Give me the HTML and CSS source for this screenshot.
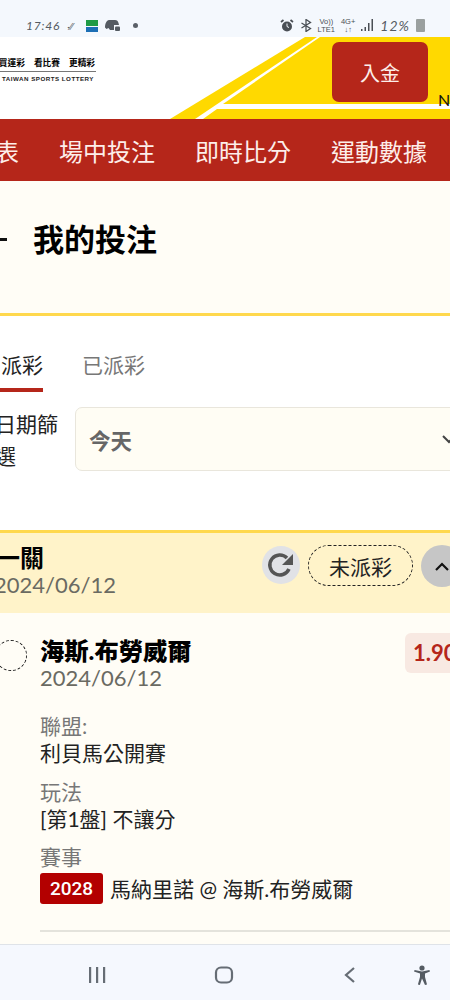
FILE: index.html
```html
<!DOCTYPE html>
<html lang="zh-Hant">
<head>
  <meta charset="UTF-8">
  <meta name="viewport" content="width=device-width, initial-scale=1.0">
  <title>我的投注</title>
  <link rel="stylesheet" href="styles.css">
</head>
<body>

  <!-- Phone status bar -->
  <div class="statusbar">
    <div class="status-left">
      <span class="clock">17:46</span>
      <span class="clock-marks">·⁄⁄</span>
      <span class="app-flag"></span>
      <svg class="app-game" width="15" height="13" viewBox="0 0 15 13"><path d="M4 1h6c2 0 3 1 3.500 3l.5 2H9v5H5l-1.500-2L1.500 10 0 8.500C0 5 1.500 1 4 1z" fill="#555b62"/><rect x="10" y="7.500" width="5" height="4.500" rx="1" fill="#555b62"/></svg>
      <span class="app-dot"></span>
    </div>
    <div class="status-right">
      <svg width="14" height="14" viewBox="0 0 14 14"><circle cx="7" cy="7.500" r="5" fill="#4a4f55"/><path d="M1 3l2.500-2M13 3l-2.500-2" stroke="#4a4f55" stroke-width="1.800"/><path d="M7 4.500v3l2 1" stroke="#f4f8fd" stroke-width="1" fill="none"/></svg>
      <svg width="12" height="13" viewBox="0 0 12 13" fill="none" stroke="#4a4f55" stroke-width="1.300"><path d="M1.500 4l9 5.500-4.500 3V.5l4.500 3-9 5.500"/></svg>
      <span class="net">Vo))<br>LTE1</span>
      <span class="net">4G+<br>↓↑</span>
      <svg width="13" height="13" viewBox="0 0 13 13" fill="#4a4f55"><rect x="0" y="10" width="1.500" height="2"/><rect x="3.500" y="8" width="1.500" height="4"/><rect x="7" y="4" width="1.500" height="8"/><rect x="10.500" y="0" width="1.500" height="12"/></svg>
      <span class="battery-text">12%</span>
      <span class="battery"></span>
    </div>
  </div>

  <!-- Header -->
  <div class="header">
    <div class="logo">
      <div class="logo-cn"><span>買運彩</span><span>看比賽</span><span>更精彩</span></div>
      <div class="logo-en">TAIWAN SPORTS LOTTERY</div>
    </div>
    <svg class="header-bg" width="280" height="82" viewBox="0 0 280 82">
      <polygon points="135,0 147,0 25,82 0,82" fill="#ffd900"/>
      <polygon points="150,0 280,0 280,67 53,67" fill="#ffd900"/>
      <polygon points="47,72 280,72 280,82 33,82" fill="#ffd900"/>
    </svg>
    <a class="deposit-btn">入金</a>
    <span class="header-cut">N</span>
  </div>

  <!-- Nav -->
  <div class="nav">
    <span class="nav-item">表</span>
    <span class="nav-item">場中投注</span>
    <span class="nav-item">即時比分</span>
    <span class="nav-item">運動數據</span>
  </div>

  <div class="content">
    <div class="page-title">
      <span class="title-dash"></span>
      <h1>我的投注</h1>
    </div>

    <div class="tab-section">
      <div class="tabs">
        <span class="tab active">派彩</span>
        <span class="tab">已派彩</span>
      </div>
      <div class="filter">
        <label class="filter-label">日期篩<br>選</label>
        <div class="filter-select">
          <span>今天</span>
          <svg width="14" height="9" viewBox="0 0 14 9" fill="none" stroke="#444" stroke-width="2"><path d="M1 1l6 6 6-6"/></svg>
        </div>
      </div>
    </div>

    <div class="bet-head">
      <div class="bet-head-text">
        <div class="bet-name">一關</div>
        <div class="bet-date">2024/06/12</div>
      </div>
      <div class="bet-actions">
        <span class="refresh">
          <svg width="28" height="28" viewBox="0 0 28 28" fill="none"><path d="M22 18a10 10 0 1 1-2-11" stroke="#555" stroke-width="3.500"/><polygon points="26,3 26,14 15,14" fill="#555"/></svg>
        </span>
        <span class="status-pill">未派彩</span>
        <span class="collapse">
          <svg width="14" height="9" viewBox="0 0 14 9" fill="none" stroke="#111" stroke-width="2.200"><path d="M1 8l6-6 6 6"/></svg>
        </span>
      </div>
    </div>

    <div class="bet-body">
      <div class="pick">
        <span class="pick-mark"></span>
        <div class="pick-text">
          <div class="pick-name">海斯.布勞威爾</div>
          <div class="pick-date">2024/06/12</div>
        </div>
        <span class="odds">1.90</span>
      </div>
      <div class="info">
        <div class="info-label">聯盟:</div>
        <div class="info-value">利貝馬公開賽</div>
      </div>
      <div class="info">
        <div class="info-label">玩法</div>
        <div class="info-value">[第1盤] 不讓分</div>
      </div>
      <div class="info">
        <div class="info-label">賽事</div>
        <div class="info-value match"><span class="match-no">2028</span> 馬納里諾 @ 海斯.布勞威爾</div>
      </div>
      <div class="divider"></div>
    </div>
  </div>

  <!-- Phone nav bar -->
  <div class="phone-nav">
    <svg class="nav-recent" width="18" height="18" viewBox="0 0 18 18" fill="#666d75"><rect x="1" y="1" width="2.200" height="16"/><rect x="8" y="1" width="2.200" height="16"/><rect x="15" y="1" width="2.200" height="16"/></svg>
    <svg class="nav-home" width="20" height="18" viewBox="0 0 20 18" fill="none" stroke="#666d75" stroke-width="2.200"><rect x="2" y="1.500" width="16" height="15" rx="5"/></svg>
    <svg class="nav-back" width="12" height="18" viewBox="0 0 12 18" fill="none" stroke="#666d75" stroke-width="2.200"><path d="M10 2L2 9l8 7"/></svg>
    <svg class="nav-access" width="18" height="20" viewBox="0 0 18 20" fill="#555c63"><circle cx="9" cy="3" r="2.600"/><path d="M1 6.500l.6-1.500L9 6.500l7.400-1.500.6 1.500-5 2V12l2 7.500-2 .5L9 13.500 6.900 20l-2-.5L7 12V8.500z"/></svg>
  </div>

</body>
</html>
```

FILE: styles.css
```css
* {
  box-sizing: border-box;
}

body {
  margin: 0;
  width: 450px;
  height: 1000px;
  overflow: hidden;
  display: flex;
  flex-direction: column;
  font-family: Lato, "Noto Sans CJK TC", sans-serif;
  background-color: #fffdf6;
  color: #000;
}

/* status bar */
.statusbar {
  height: 37px;
  flex-shrink: 0;
  display: flex;
  justify-content: space-between;
  align-items: center;
  padding: 14px 25px 0 26px;
  background-color: #f4f8fd;
  color: #555b62;
}

.status-left,
.status-right {
  display: flex;
  align-items: center;
}

.status-left {
  gap: 7px;
}

.status-right {
  gap: 6px;
}

.clock {
  font-size: 12px;
  font-style: italic;
  letter-spacing: 0.8px;
}

.clock-marks {
  width: 12px;
  font-size: 10px;
  font-style: italic;
}

.app-flag {
  width: 12px;
  height: 12px;
  background: linear-gradient(#1f9a45 0 50%, #f4f8fd 50% 60%, #1c6fb5 60%);
}

.app-dot {
  width: 5px;
  height: 5px;
  margin-left: 6px;
  border-radius: 50%;
  background-color: #5a6068;
}

.net {
  font-family: "Liberation Sans", sans-serif;
  font-size: 7.5px;
  line-height: 7.5px;
  text-align: center;
  color: #4a4f55;
}

.battery-text {
  font-size: 14px;
  font-style: italic;
  letter-spacing: 1px;
}

.battery {
  width: 9px;
  height: 13px;
  border-radius: 1px;
  background-color: #9aa09f;
}

/* header */
.header {
  position: relative;
  height: 82px;
  flex-shrink: 0;
  display: flex;
  justify-content: space-between;
  background-color: white;
}

.logo {
  width: 96px;
  margin-top: 21px;
  font-family: "Liberation Sans", "Noto Sans CJK TC", sans-serif;
  font-weight: bold;
  white-space: nowrap;
}

.logo-cn {
  height: 14px;
  display: flex;
  justify-content: flex-end;
  gap: 9px;
  padding-right: 1px;
  font-size: 8.7px;
  line-height: 11px;
  border-bottom: 1px solid #777;
}

.logo-en {
  padding: 3px 0 0 2px;
  font-size: 6.2px;
  letter-spacing: 0.5px;
  color: #222;
}

.header-bg {
  position: absolute;
  right: 0;
  top: 0;
}

.deposit-btn {
  position: absolute;
  left: 332px;
  top: 5px;
  width: 96px;
  height: 60px;
  display: flex;
  align-items: center;
  justify-content: center;
  border-radius: 7px;
  background-color: #b5261a;
  color: #fdeeea;
  font-size: 20px;
}

.header-cut {
  position: absolute;
  left: 438px;
  top: 53px;
  font-size: 16px;
  color: #111;
}

/* nav */
.nav {
  height: 62px;
  flex-shrink: 0;
  display: flex;
  align-items: center;
  gap: 40px;
  margin-left: -5px;
  background-color: #b5261a;
  color: #fdeeea;
  font-size: 24px;
  white-space: nowrap;
}

.content {
  flex: 1;
  min-height: 0;
  overflow: hidden;
}

/* title */
.page-title {
  height: 135px;
  display: flex;
  align-items: flex-start;
  gap: 26px;
  padding-top: 36px;
  border-bottom: 3px solid #ffd84d;
}

.title-dash {
  width: 7px;
  height: 3px;
  margin-top: 21px;
  background-color: #111;
}

.page-title h1 {
  margin: 0;
  font-size: 31px;
  line-height: 44px;
  font-weight: bold;
}

/* tabs and filter */
.tab-section {
  height: 214px;
  background-color: white;
}

.tabs {
  display: flex;
  gap: 39px;
  padding-top: 33px;
}

.tab {
  height: 43px;
  font-size: 21px;
  line-height: 32px;
  color: #777;
}

.tab.active {
  padding-left: 1px;
  color: #222;
  border-bottom: 4px solid #b5261a;
}

.filter {
  display: flex;
  align-items: flex-start;
  gap: 17px;
  margin-top: 15px;
}

.filter-label {
  width: 58px;
  margin-left: -5px;
  padding-top: 1px;
  margin-right: 5px;
  font-size: 21px;
  line-height: 32px;
  color: #222;
  white-space: nowrap;
}

.filter-select {
  width: 400px;
  height: 64px;
  flex-shrink: 0;
  display: flex;
  justify-content: space-between;
  align-items: center;
  padding: 0 18px 0 13px;
  border: 1px solid #e9e6dc;
  border-radius: 7px;
  background-color: #fffdf4;
  font-size: 21.5px;
  font-weight: bold;
  color: #666;
}

/* bet card */
.bet-head {
  height: 83px;
  display: flex;
  justify-content: space-between;
  padding-top: 11px;
  border-top: 3px solid #ffd84d;
  background-color: #fff3c9;
}

.bet-name {
  margin-left: -4px;
  font-size: 24px;
  line-height: 28px;
  font-weight: bold;
}

.bet-date,
.pick-date {
  font-size: 22px;
  line-height: 26px;
  color: #6a6a62;
}

.bet-date {
  margin-left: -6px;
}

.bet-actions {
  display: flex;
  align-items: flex-start;
  gap: 8px;
  margin-right: -13px;
  padding-top: 1px;
}

.refresh,
.collapse {
  display: flex;
  align-items: center;
  justify-content: center;
  border-radius: 50%;
}

.refresh {
  width: 38px;
  height: 38px;
  margin-top: 1px;
  background-color: #e1e2e6;
}

.collapse {
  width: 42px;
  height: 42px;
  background-color: #c6c6c6;
}

.status-pill {
  width: 105px;
  height: 41px;
  display: flex;
  align-items: center;
  justify-content: center;
  border: 1px dashed #222;
  border-radius: 21px;
  font-size: 21px;
  color: #222;
}

.bet-body {
  padding: 24px 0 0 40px;
}

.pick {
  position: relative;
  display: flex;
  justify-content: space-between;
}

.pick-mark {
  position: absolute;
  left: -45px;
  top: 3px;
  width: 32px;
  height: 31px;
  border: 1px dashed #222;
  border-radius: 50%;
}

.pick-name {
  font-size: 24.3px;
  line-height: 28px;
  font-weight: 900;
}

.odds {
  width: 60px;
  height: 40px;
  margin: -4px -15px 0 0;
  padding: 8px 0 0 8px;
  border-radius: 6px;
  background-color: #f8e9e2;
  color: #b5261a;
  font-size: 22px;
  line-height: 24px;
  font-weight: bold;
}

.info {
  margin-top: 12.5px;
}

.pick + .info {
  margin-top: 22px;
}

.info-label {
  font-size: 21px;
  line-height: 26px;
  color: #777;
}

.info-value {
  font-size: 21px;
  line-height: 27px;
  color: #222;
}

.match {
  display: flex;
  align-items: center;
  gap: 7px;
  margin-top: 3px;
  white-space: nowrap;
}

.match-no {
  width: 63px;
  height: 31px;
  display: flex;
  align-items: center;
  justify-content: center;
  border-radius: 3px;
  background-color: #b30000;
  color: white;
  font-family: Roboto, sans-serif;
  font-size: 19px;
  font-weight: 500;
}

.divider {
  height: 2px;
  margin-top: 26px;
  background-color: #e4e3dc;
}

/* phone nav */
.phone-nav {
  height: 56px;
  flex-shrink: 0;
  display: flex;
  align-items: center;
  padding: 4px 0 0 88px;
  border-top: 1px solid #dfe3e8;
  background-color: #f5f8fe;
}

.nav-home {
  margin-left: 108px;
}

.nav-back {
  margin-left: 110px;
}

.nav-access {
  margin-left: 57px;
}
```
